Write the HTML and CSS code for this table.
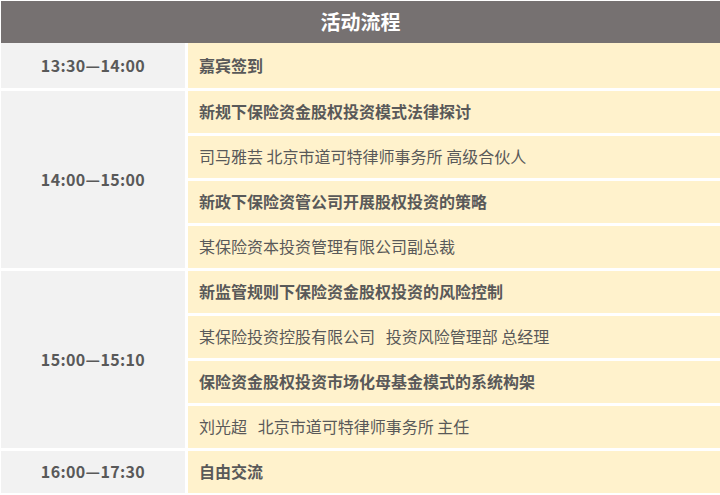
FILE: index.html
```html
<!DOCTYPE html>
<html lang="zh-CN">
<head>
<meta charset="utf-8">
<title>活动流程</title>
<link rel="stylesheet" href="styles.css">
</head>
<body>
<div class="schedule">
  <div class="header">活动流程</div>
  <div class="grid">
    <div class="time first">13:30—14:00</div>
    <div class="item title first">嘉宾签到</div>

    <div class="time span4">14:00—15:00</div>
    <div class="item title">新规下保险资金股权投资模式法律探讨</div>
    <div class="item">司马雅芸 北京市道可特律师事务所 高级合伙人</div>
    <div class="item title">新政下保险资管公司开展股权投资的策略</div>
    <div class="item">某保险资本投资管理有限公司副总裁</div>

    <div class="time span4">15:00—15:10</div>
    <div class="item title">新监管规则下保险资金股权投资的风险控制</div>
    <div class="item">某保险投资控股有限公司&nbsp;&nbsp; 投资风险管理部 总经理</div>
    <div class="item title">保险资金股权投资市场化母基金模式的系统构架</div>
    <div class="item">刘光超&nbsp;&nbsp; 北京市道可特律师事务所 主任</div>

    <div class="time">16:00—17:30</div>
    <div class="item title">自由交流</div>
  </div>
</div>
</body>
</html>
```
FILE: styles.css
```css
html, body {
  margin: 0;
  padding: 0;
  background: #ffffff;
}
body {
  font-family: "Noto Sans CJK SC", "Noto Sans", sans-serif;
  color: #595959;
}
.schedule {
  margin: 1px 0 0 1px;
  width: 719px;
}
.header {
  height: 42px;
  background: #767171;
  color: #ffffff;
  font-size: 20px;
  font-weight: bold;
  display: flex;
  align-items: center;
  justify-content: center;
  padding-bottom: 2px;
  box-sizing: border-box;
}
.grid {
  display: grid;
  grid-template-columns: 184px 1fr;
  grid-template-rows: 45px repeat(9, 42px);
  column-gap: 3px;
  row-gap: 3px;
}
.time {
  background: #f2f2f2;
  font-size: 16px;
  font-weight: bold;
  letter-spacing: 0.35px;
  display: flex;
  align-items: center;
  justify-content: center;
  grid-column: 1;
  padding-bottom: 2px;
}
.span4 {
  grid-row: span 4;
}
.item {
  background: #fff2cc;
  font-size: 16px;
  display: flex;
  align-items: center;
  padding-left: 11px;
  padding-bottom: 2px;
  grid-column: 2;
  white-space: pre;
}
.title {
  font-weight: bold;
}
```
